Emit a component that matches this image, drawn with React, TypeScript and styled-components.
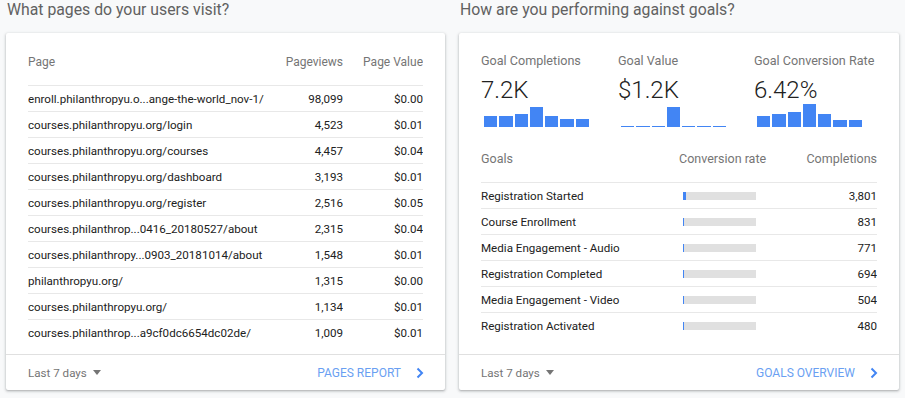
import * as React from "react";
import styled, { createGlobalStyle } from "styled-components";

const GlobalStyle = createGlobalStyle`
  html, body {
    margin: 0;
    padding: 0;
    background: #f8f9fa;
    font-family: Roboto, "Noto Sans", Arial, sans-serif;
  }
`

const Page = styled.div`
  display: grid;
  grid-template-columns: 439px 440px;
  column-gap: 14px;
  padding: 0 6px;
  width: 905px;
  height: 398px;
  box-sizing: border-box;
`

const Section = styled.section`
  display: flex;
  flex-direction: column;
`

const Title = styled.h2`
  margin: 0;
  height: 33px;
  font-size: 15.8px;
  line-height: 20px;
  font-weight: 400;
  color: #616161;
  padding-left: 1px;
`

const Card = styled.div`
  display: flex;
  flex-direction: column;
  height: 357px;
  background: #fff;
  border-radius: 2px;
  box-shadow: 0 1px 2px rgba(60, 64, 67, 0.3), 0 1px 3px 1px rgba(60, 64, 67, 0.12);
`

const CardBody = styled.div<{ top?: number }>`
  flex: 1;
  padding: ${(p) => p.top ?? 16}px 22px 0;
`

const Row = styled.div<{ cols: string; head?: boolean; last?: boolean; headSize?: number }>`
  display: grid;
  grid-template-columns: ${(p) => p.cols};
  align-items: ${(p) => (p.head ? "start" : "center")};
  box-sizing: border-box;
  height: ${(p) => (p.head ? 37 : 26)}px;
  padding-top: ${(p) => (p.head ? 6 : 0)}px;
  border-bottom: ${(p) => (p.last ? "none" : "1px solid #e8e8e8")};
  font-size: ${(p) => (p.head ? p.headSize ?? 12 : 11.6)}px;
  line-height: 14px;
  color: ${(p) => (p.head ? "#757575" : "#212121")};
`

const Cell = styled.div<{ right?: boolean }>`
  text-align: ${(p) => (p.right ? "right" : "left")};
  white-space: nowrap;
  overflow: hidden;
`

const Footer = styled.div`
  display: flex;
  align-items: center;
  justify-content: space-between;
  height: 35px;
  border-top: 1px solid #e0e0e0;
  padding: 0 21px 0 22px;
`

const Range = styled.div`
  display: flex;
  align-items: center;
  gap: 6px;
  font-size: 11.6px;
  color: #757575;
`

const Caret = styled.span`
  width: 0;
  height: 0;
  border-left: 4px solid transparent;
  border-right: 4px solid transparent;
  border-top: 5px solid #757575;
`

const Link = styled.a`
  display: flex;
  align-items: center;
  gap: 15px;
  font-size: 12px;
  color: #6a9ff2;
  text-decoration: none;
  text-transform: uppercase;
`

const Metrics = styled.div`
  display: grid;
  grid-template-columns: 137px 136px 1fr;
`

const MetricLabel = styled.div`
  font-size: 12.6px;
  line-height: 16px;
  color: #757575;
  white-space: nowrap;
`

const MetricValue = styled.div`
  margin-top: 6px;
  font-size: 24px;
  line-height: 30px;
  font-weight: 300;
  color: #212121;
`

const Spark = styled.div`
  display: flex;
  align-items: flex-end;
  gap: 2px;
  width: 105px;
  height: 22px;
  margin-left: 3px;
`

const SparkBar = styled.div`
  flex: 1;
  background: #4285f4;
`

const Track = styled.div`
  width: 73px;
  height: 8px;
  margin-left: 4px;
  background: #e0e0e0;
`

const Fill = styled.div`
  height: 100%;
  background: #4285f4;
`

const GoalsTable = styled.div`
  margin-top: 19px;
`

const Chevron = () => (
  <svg width="8" height="12" viewBox="0 0 8 12">
    <path d="M1.5 1.5 L6 6 L1.5 10.5" fill="none" stroke="#4285f4" strokeWidth="2" />
  </svg>
)

const pages: [string, string, string][] = [
  ["enroll.philanthropyu.o...ange-the-world_nov-1/", "98,099", "$0.00"],
  ["courses.philanthropyu.org/login", "4,523", "$0.01"],
  ["courses.philanthropyu.org/courses", "4,457", "$0.04"],
  ["courses.philanthropyu.org/dashboard", "3,193", "$0.01"],
  ["courses.philanthropyu.org/register", "2,516", "$0.05"],
  ["courses.philanthrop...0416_20180527/about", "2,315", "$0.04"],
  ["courses.philanthropy...0903_20181014/about", "1,548", "$0.01"],
  ["philanthropyu.org/", "1,315", "$0.00"],
  ["courses.philanthropyu.org/", "1,134", "$0.01"],
  ["courses.philanthrop...a9cf0dc6654dc02de/", "1,009", "$0.01"],
]

const metrics = [
  { label: "Goal Completions", value: "7.2K", bars: [11, 11, 13, 20, 11, 8, 8] },
  { label: "Goal Value", value: "$1.2K", bars: [1, 1, 1, 20, 1, 1, 1] },
  { label: "Goal Conversion Rate", value: "6.42%", bars: [11, 13, 15, 23, 13, 7, 7] },
]

const goals: [string, number, string][] = [
  ["Registration Started", 3, "3,801"],
  ["Course Enrollment", 1, "831"],
  ["Media Engagement - Audio", 1, "771"],
  ["Registration Completed", 1, "694"],
  ["Media Engagement - Video", 1, "504"],
  ["Registration Activated", 1, "480"],
]

const pageCols = "1fr 70px 80px"
const goalCols = "198px 1fr 100px"

export default function App() {
  return (
    <>
      <GlobalStyle />
      <Page>
        <Section>
          <Title>What pages do your users visit?</Title>
          <Card>
            <CardBody>
              <Row cols={pageCols} head>
                <Cell>Page</Cell>
                <Cell right>Pageviews</Cell>
                <Cell right>Page Value</Cell>
              </Row>
              {pages.map(([p, v, val], i) => (
                <Row cols={pageCols} key={p} last={i === pages.length - 1}>
                  <Cell>{p}</Cell>
                  <Cell right>{v}</Cell>
                  <Cell right>{val}</Cell>
                </Row>
              ))}
            </CardBody>
            <Footer>
              <Range>Last 7 days <Caret /></Range>
              <Link>Pages report <Chevron /></Link>
            </Footer>
          </Card>
        </Section>
        <Section>
          <Title>How are you performing against goals?</Title>
          <Card>
            <CardBody top={20}>
              <Metrics>
                {metrics.map((m) => (
                  <div key={m.label}>
                    <MetricLabel>{m.label}</MetricLabel>
                    <MetricValue>{m.value}</MetricValue>
                    <Spark>
                      {m.bars.map((h, i) => (
                        <SparkBar key={i} style={{ height: h }} />
                      ))}
                    </Spark>
                  </div>
                ))}
              </Metrics>
              <GoalsTable>
                <Row cols={goalCols} head headSize={12.5}>
                  <Cell>Goals</Cell>
                  <Cell>Conversion rate</Cell>
                  <Cell right>Completions</Cell>
                </Row>
                {goals.map(([g, w, c], i) => (
                  <Row cols={goalCols} key={g} last={i === goals.length - 1}>
                    <Cell>{g}</Cell>
                    <Cell>
                      <Track>
                        <Fill style={{ width: w }} />
                      </Track>
                    </Cell>
                    <Cell right>{c}</Cell>
                  </Row>
                ))}
              </GoalsTable>
            </CardBody>
            <Footer>
              <Range>Last 7 days <Caret /></Range>
              <Link>Goals overview <Chevron /></Link>
            </Footer>
          </Card>
        </Section>
      </Page>
    </>
  )
}
